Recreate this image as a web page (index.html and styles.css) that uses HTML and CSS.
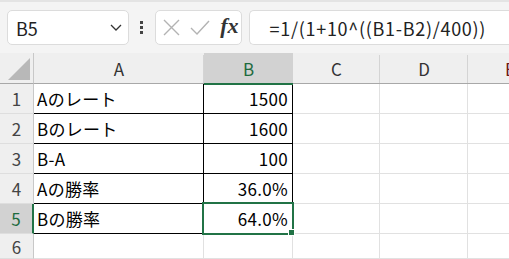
FILE: index.html
```html
<!DOCTYPE html>
<html lang="ja">
<head>
  <meta charset="UTF-8" />
  <title>勝率</title>
  <link rel="stylesheet" href="styles.css">
</head>
<body>
  <!-- 数式バー -->
  <div class="barra">
    <div class="nombre">
      <span>B5</span>
      <svg class="chevron" width="12" height="7" viewBox="0 0 12 7"><path d="M1 1 L6 6 L11 1" fill="none" stroke="#333" stroke-width="1.3"/></svg>
    </div>
    <div class="puntos"><i></i><i></i><i></i></div>
    <div class="botones">
      <svg width="17" height="17" viewBox="0 0 17 17"><path d="M1 1 L16 16 M16 1 L1 16" stroke="#b3b3b3" stroke-width="1.4"/></svg>
      <svg width="20" height="15" viewBox="0 0 20 15"><path d="M1 8 L7 14 L19 1" fill="none" stroke="#b3b3b3" stroke-width="1.4"/></svg>
      <span class="fx">fx</span>
    </div>
    <div class="formula">=1/(1+10^((B1-B2)/400))</div>
  </div>

  <!-- hoja -->
  <div class="hoja">
    <div class="esquina"><span class="triangulo"></span></div>
    <div class="col">A</div>
    <div class="col sel">B</div>
    <div class="col">C</div>
    <div class="col">D</div>
    <div class="col ultima">E</div>

    <div class="fila">1</div>
    <div class="celda borde">Aのレート</div>
    <div class="celda borde num">1500</div>
    <div class="celda"></div><div class="celda"></div><div class="celda"></div>

    <div class="fila">2</div>
    <div class="celda borde">Bのレート</div>
    <div class="celda borde num">1600</div>
    <div class="celda"></div><div class="celda"></div><div class="celda"></div>

    <div class="fila">3</div>
    <div class="celda borde">B-A</div>
    <div class="celda borde num">100</div>
    <div class="celda"></div><div class="celda"></div><div class="celda"></div>

    <div class="fila">4</div>
    <div class="celda borde">Aの勝率</div>
    <div class="celda borde num">36.0%</div>
    <div class="celda"></div><div class="celda"></div><div class="celda"></div>

    <div class="fila sel">5</div>
    <div class="celda borde">Bの勝率</div>
    <div class="celda borde num activa">64.0%<span class="asa"></span></div>
    <div class="celda"></div><div class="celda"></div><div class="celda"></div>

    <div class="fila">6</div>
    <div class="celda"></div>
    <div class="celda"></div>
    <div class="celda"></div><div class="celda"></div><div class="celda"></div>
  </div>
</body>
</html>
```

FILE: styles.css
```css
body {
  margin: 0;
  width: 509px;
  height: 259px;
  overflow: hidden;
  background: #fff;
  font-family: "Noto Sans CJK JP", "Noto Sans", sans-serif;
  color: #000;
}

.barra {
  height: 53px;
  border-top: 2px solid #e4e4e4;
  background: #f4f4f4;
  display: flex;
  align-items: flex-start;
  padding: 8px 0 0 7px;
  box-sizing: border-box;
}

.nombre, .botones, .formula {
  height: 35px;
  box-sizing: border-box;
  background: #fff;
  border: 1px solid #dcdcdc;
  border-radius: 5px;
  display: flex;
  align-items: center;
}

.nombre {
  width: 126px;
  padding: 0 6px 0 8px;
  justify-content: space-between;
  font-size: 18px;
  color: #222;
}

.puntos {
  width: 27px;
  height: 35px;
  display: flex;
  flex-direction: column;
  align-items: center;
  justify-content: center;
  gap: 2px;
}

.puntos i {
  display: block;
  width: 3px;
  height: 3px;
  background: #444;
}

.botones {
  width: 90px;
  padding: 0 0 0 7px;
  justify-content: space-between;
}

.fx {
  font-family: "Liberation Serif", serif;
  font-style: italic;
  font-weight: bold;
  font-size: 22px;
  color: #333;
  line-height: 1;
  margin-top: -3px;
  margin-right: -2px;
  padding-right: 4px;
}

.formula {
  margin-left: 7px;
  width: 270px;
  border-right: none;
  border-radius: 5px 0 0 5px;
  padding-left: 20px;
  font-size: 18px;
  letter-spacing: 0.7px;
  color: #222;
  white-space: nowrap;
}

.hoja {
  display: grid;
  grid-template-columns: 34px 170px 89px 87px 88px 60px;
  grid-template-rows: 31px 30px 30px 30px 30px 30px 25px;
  font-size: 17px;
}

.esquina {
  background: #efefef;
  border-right: 1px solid #c8c8c8;
  border-bottom: 1px solid #a8a8a8;
  position: relative;
}

.triangulo {
  position: absolute;
  left: 8px;
  top: 5px;
  width: 22px;
  height: 22px;
  background: #b8b8b8;
  clip-path: polygon(100% 0, 100% 100%, 0 100%);
}

.col {
  background: #efefef;
  border-bottom: 1px solid #a8a8a8;
  display: flex;
  align-items: center;
  justify-content: center;
  color: #333;
  position: relative;
}

.col::after {
  content: "";
  position: absolute;
  right: 0;
  top: 2px;
  bottom: 0;
  width: 1px;
  background: #d4d4d4;
}

.col.sel {
  background: #d2d2d2;
  color: #1d6b3e;
  border-bottom: 2px solid #217346;
  margin-bottom: -1px;
}

.col.sel::after {
  display: none;
}

.col.ultima {
  justify-content: flex-start;
  padding-left: 37px;
  color: #6b1a1a;
}

.fila {
  background: #efefef;
  border-right: 1px solid #c8c8c8;
  border-bottom: 1px solid #dedede;
  display: flex;
  align-items: center;
  justify-content: center;
  color: #444;
  font-size: 17px;
}

.fila.sel {
  background: #d2d2d2;
  color: #1d6b3e;
  border-right: 2px solid #217346;
}

.celda {
  border-right: 1px solid #e1e1e1;
  border-bottom: 1px solid #e1e1e1;
  display: flex;
  align-items: center;
  padding: 0 4px 0 3px;
  white-space: nowrap;
  letter-spacing: 0.3px;
}

.celda.borde {
  border-right-color: #000;
  border-bottom-color: #000;
}

.num {
  justify-content: flex-end;
}

.activa {
  position: relative;
}

.activa::before {
  content: "";
  position: absolute;
  left: -2px;
  top: -2px;
  right: -2px;
  bottom: -2px;
  border: 2px solid #217346;
}

.asa {
  position: absolute;
  right: -3px;
  bottom: -3px;
  width: 5px;
  height: 5px;
  background: #217346;
  border: 1px solid #fff;
}
```
